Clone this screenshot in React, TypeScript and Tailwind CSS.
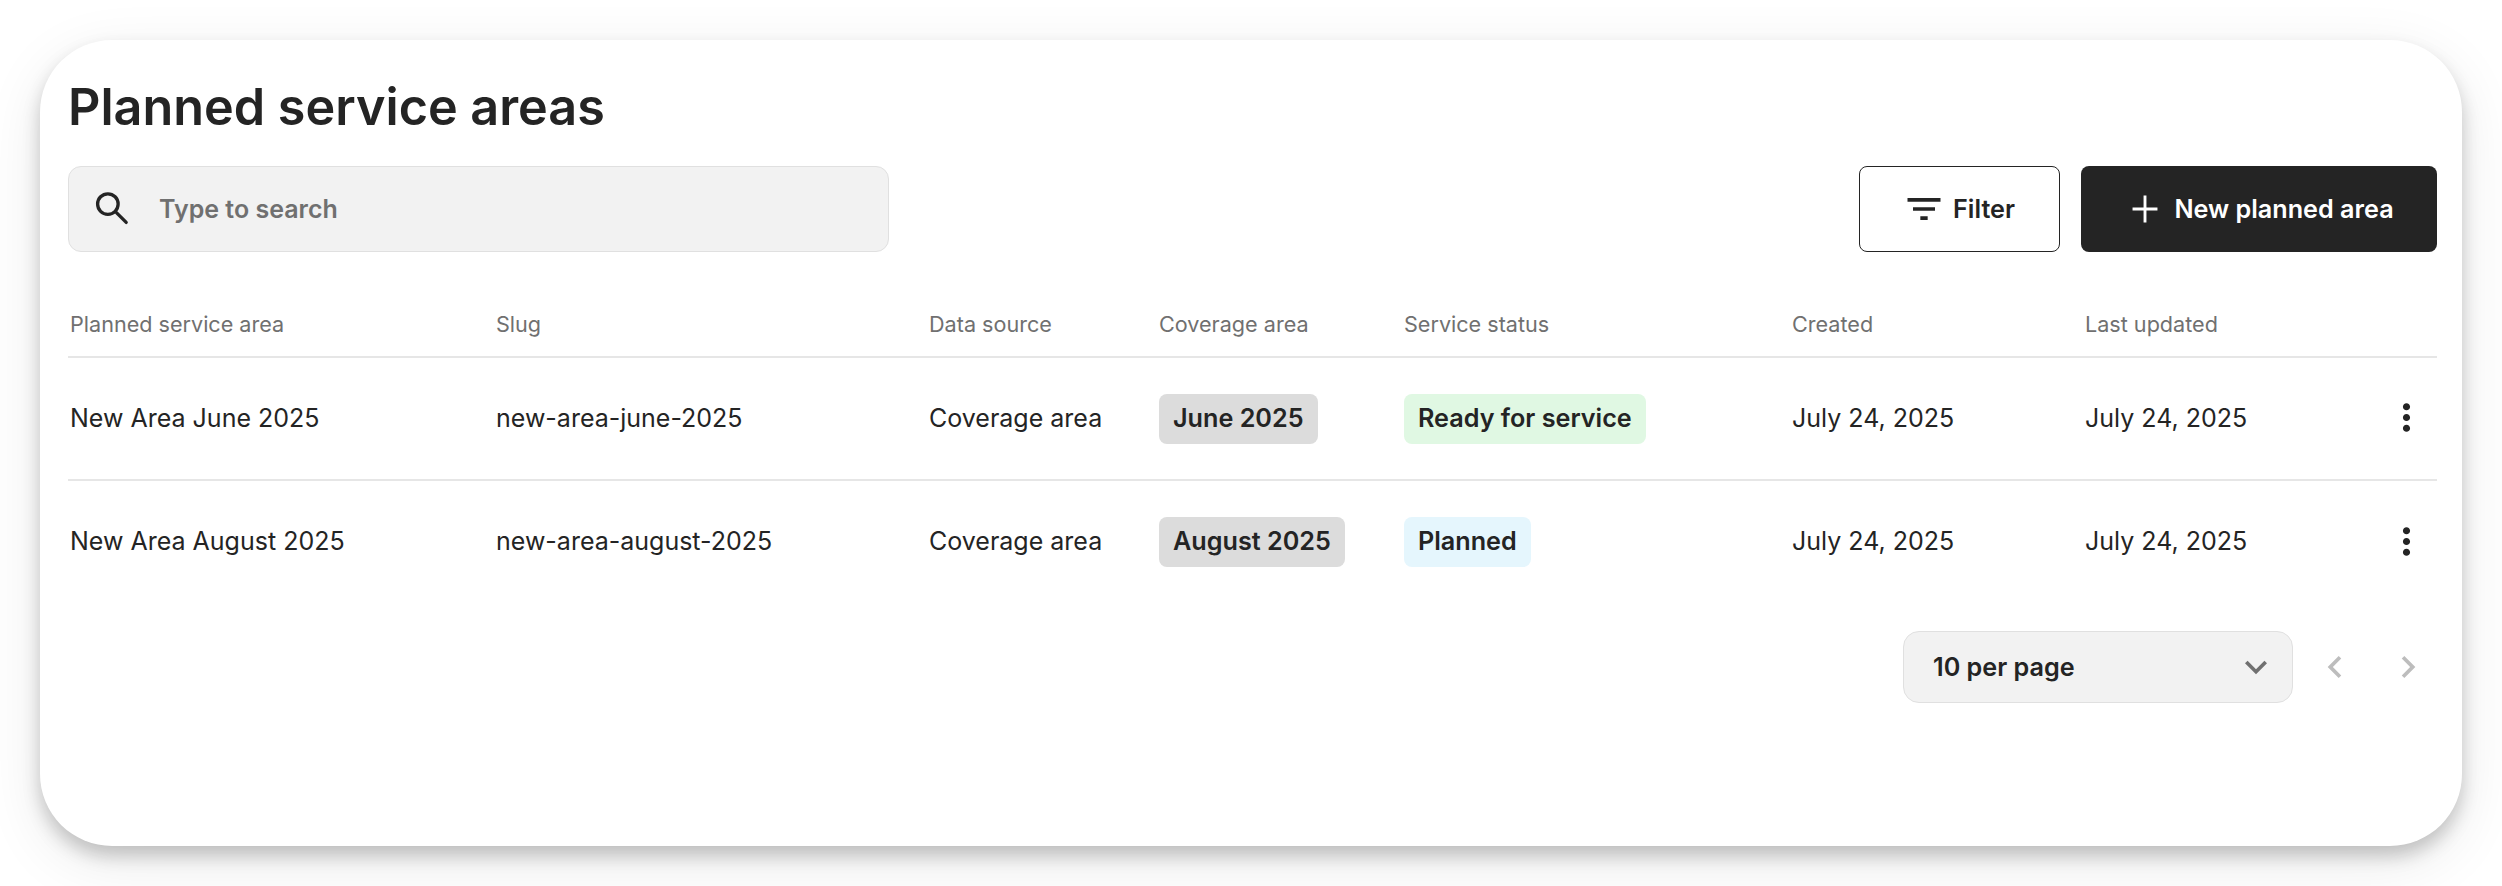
import { MdChevronLeft, MdChevronRight, MdExpandMore, MdFilterList, MdMoreVert } from 'react-icons/md'

const columns = ['Planned service area', 'Slug', 'Data source', 'Coverage area', 'Service status', 'Created', 'Last updated', '']

const rows = [
  {
    name: 'New Area June 2025',
    slug: 'new-area-june-2025',
    coverage: 'June 2025',
    status: 'Ready for service',
    statusClass: 'bg-[#e0f8e3]',
  },
  {
    name: 'New Area August 2025',
    slug: 'new-area-august-2025',
    coverage: 'August 2025',
    status: 'Planned',
    statusClass: 'bg-[#e5f6fd]',
  },
]

const Badge = ({ label, className }: { label: string; className: string }) => (
  <span className={`inline-flex h-[50px] items-center rounded-[8px] px-[14px] text-[25.2px] font-semibold ${className}`}>
    {label}
  </span>
)

const SearchIcon = () => (
  <svg width="44" height="44" viewBox="0 0 24 24" fill="none" stroke="currentColor" strokeWidth="1.8" strokeLinecap="round">
    <circle cx="9.2" cy="9.3" r="5.6" />
    <path d="M14 14.1l5.2 5.2" />
  </svg>
)

const PlusIcon = () => (
  <svg width="46" height="46" viewBox="0 0 24 24" fill="none" stroke="currentColor" strokeWidth="1.5">
    <path d="M12 5v14M5.5 12h13" />
  </svg>
)

export default function App() {
  return (
    <div className="h-[886px] overflow-hidden bg-white p-[40px] font-['Inter',sans-serif] text-[#242424]">
      <div className="flex h-[806px] w-[2422px] flex-col rounded-[72px] bg-white pl-[28px] pr-[25px] pt-[35px] shadow-[0_10px_18px_rgba(0,0,0,0.2),0_16px_60px_rgba(0,0,0,0.09)]">
        <h1 className="text-[50.3px] leading-[64px] font-semibold">Planned service areas</h1>

        <div className="mt-[27px] flex h-[86px] items-stretch">
          <div className="flex w-[821px] items-center gap-[24px] rounded-[13px] border border-[#e0e0e0] bg-[#f2f2f2] pl-[22px]">
            <SearchIcon />
            <span className="pt-[2px] text-[25px] font-semibold text-[#707070]">Type to search</span>
          </div>
          <button className="ml-auto flex w-[201px] items-center justify-center gap-[7px] rounded-[8px] border border-[#242424] bg-white pr-[2px] text-[25.2px] font-semibold">
            <MdFilterList size={44} />
            <span className="pt-[1px]">Filter</span>
          </button>
          <button className="ml-[21px] flex w-[356px] items-center justify-center gap-[6px] rounded-[8px] bg-[#242424] pr-[2px] text-[25.2px] font-semibold text-white">
            <PlusIcon />
            <span className="pt-[1px]">New planned area</span>
          </button>
        </div>

        <table className="mt-[41px] w-full table-fixed border-collapse text-left">
          <colgroup>
            <col className="w-[427px]" />
            <col className="w-[433px]" />
            <col className="w-[230px]" />
            <col className="w-[245px]" />
            <col className="w-[388px]" />
            <col className="w-[293px]" />
            <col className="w-[280px]" />
            <col />
          </colgroup>
          <thead>
            <tr className="h-[64px] border-b-2 border-[#e6e6e6]">
              {columns.map((column, index) => (
                <th key={index} className={`${index === 0 ? 'pl-[2px]' : 'pl-[1px]'} text-[21.6px] font-normal text-[#707070]`}>
                  {column}
                </th>
              ))}
            </tr>
          </thead>
          <tbody className="text-[25px]">
            {rows.map((row, index) => (
              <tr key={row.slug} className={index === 0 ? 'h-[123px] border-b-2 border-[#e6e6e6]' : 'h-[123px]'}>
                <td className="pl-[2px]">{row.name}</td>
                <td className="pl-[1px]">{row.slug}</td>
                <td className="pl-[1px]">Coverage area</td>
                <td className="pl-[1px]">
                  <Badge label={row.coverage} className="bg-[#dcdcdc]" />
                </td>
                <td className="pl-[1px]">
                  <Badge label={row.status} className={row.statusClass} />
                </td>
                <td className="pl-[1px]">July 24, 2025</td>
                <td className="pl-[1px]">July 24, 2025</td>
                <td>
                  <MdMoreVert size={43} className="mb-[2px] ml-[21px]" />
                </td>
              </tr>
            ))}
          </tbody>
        </table>

        <div className="mt-[28px] flex items-center justify-end">
          <div className="flex h-[72px] w-[390px] items-center justify-between rounded-[16px] border border-[#e0e0e0] bg-[#f2f2f2] pl-[29px] pr-[14px]">
            <span className="pt-[1px] text-[25.2px] font-semibold">10 per page</span>
            <MdExpandMore size={44} className="text-[#707070]" />
          </div>
          <MdChevronLeft size={44} className="ml-[20px] text-[#bdbdbd]" />
          <MdChevronRight size={44} className="ml-[29px] mr-[7px] text-[#bdbdbd]" />
        </div>
      </div>
    </div>
  )
}
